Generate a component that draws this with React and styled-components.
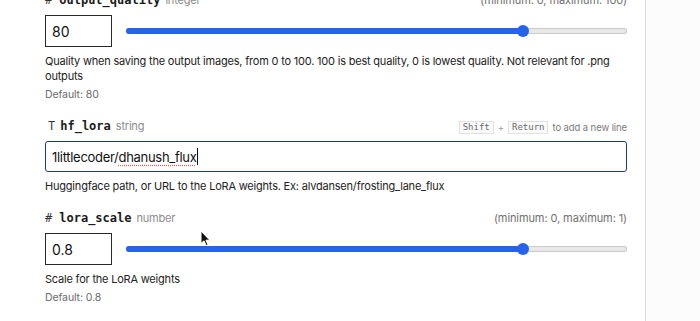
import styled, { createGlobalStyle } from 'styled-components';

const GlobalStyle = createGlobalStyle`
  html, body {
    margin: 0;
    padding: 0;
    background: #fff;
  }
  body {
    font-family: Inter, "Noto Sans", sans-serif;
    color: #1f1f1f;
    overflow: hidden;
  }
`;

function Slider({ value }) {
  const pos = `calc(6px + ${value} * (100% - 12px))`;
  return (
    <Track>
      <Fill style={{ width: pos }} />
      <Thumb style={{ left: pos }} />
    </Track>
  );
}

function App() {
  return (
    <Page>
      <GlobalStyle />
      <Main>
        <Form>
          <Field>
            <LabelRow>
              <Name>
                <Glyph>#</Glyph>output_quality<TypeName>integer</TypeName>
              </Name>
              <Range>(minimum: 0, maximum: 100)</Range>
            </LabelRow>
            <Row>
              <NumberBox>80</NumberBox>
              <Slider value={0.8} />
            </Row>
            <Description>
              Quality when saving the output images, from 0 to 100. 100 is best quality, 0 is lowest
              quality. Not relevant for .png outputs
            </Description>
            <Default>Default: 80</Default>
          </Field>

          <Field>
            <LabelRow>
              <Name>
                <Glyph $serif>T</Glyph>hf_lora<TypeName>string</TypeName>
              </Name>
              <Hint>
                <Kbd>Shift</Kbd>
                <Plus>+</Plus>
                <Kbd>Return</Kbd>
                <span>to add a new line</span>
              </Hint>
            </LabelRow>
            <TextBox>
              1littlecoder/<Misspelled>dhanush_flux</Misspelled>
              <Caret />
            </TextBox>
            <Description>
              Huggingface path, or URL to the LoRA weights. Ex: alvdansen/frosting_lane_flux
            </Description>
          </Field>

          <Field>
            <LabelRow>
              <Name>
                <Glyph>#</Glyph>lora_scale<TypeName>number</TypeName>
              </Name>
              <Range>(minimum: 0, maximum: 1)</Range>
            </LabelRow>
            <Row>
              <NumberBox>0.8</NumberBox>
              <Slider value={0.8} />
            </Row>
            <Description>Scale for the LoRA weights</Description>
            <Default>Default: 0.8</Default>
          </Field>
        </Form>
      </Main>
      <Side />
      <Pointer width="11" height="17" viewBox="0 0 11 17">
        <path
          d="M1 1 L1 13.5 L4 10.8 L6.2 15.6 L8 14.8 L5.9 10.2 L9.8 10.2 Z"
          fill="#111"
          stroke="#fff"
          strokeWidth="1"
          strokeLinejoin="round"
        />
      </Pointer>
    </Page>
  );
}

export default App;

const Page = styled.div`
  position: relative;
  display: flex;
  width: 700px;
  height: 321px;
  overflow: hidden;
`;

const Main = styled.div`
  width: 646px;
  box-sizing: border-box;
  padding: 0 18px 0 45px;
  border-right: 1px solid #dcdcdc;
  background: #fff;
`;

const Side = styled.div`
  flex: 1;
  background: #fcfcfc;
`;

const Form = styled.div`
  display: flex;
  flex-direction: column;
  gap: 16px;
  margin-top: -8px;
`;

const Field = styled.div`
  display: flex;
  flex-direction: column;
`;

const LabelRow = styled.div`
  display: flex;
  justify-content: space-between;
  align-items: baseline;
  height: 16px;
  line-height: 16px;
  margin-bottom: 7px;
`;

const Name = styled.div`
  font-family: "DejaVu Sans Mono", monospace;
  font-size: 12px;
  font-weight: 700;
  color: #1a1a1a;
`;

const Glyph = styled.span`
  font-family: ${(p) => (p.$serif ? '"Liberation Mono", monospace' : '"DejaVu Sans Mono", monospace')};
  font-weight: 400;
  margin-left: ${(p) => (p.$serif ? '3px' : '0')};
  margin-right: ${(p) => (p.$serif ? '5px' : '7px')};
  color: #333;
`;

const TypeName = styled.span`
  font-family: Inter, "Noto Sans", sans-serif;
  font-size: 11px;
  font-weight: 400;
  color: #8c8c8c;
  margin-left: 5px;
  letter-spacing: -0.2px;
`;

const Range = styled.span`
  font-size: 11px;
  letter-spacing: -0.1px;
  color: #707070;
`;

const Hint = styled.div`
  display: flex;
  align-items: center;
  gap: 4px;
  font-size: 9.5px;
  letter-spacing: -0.1px;
  color: #7a7a7a;
`;

const Kbd = styled.span`
  font-family: "DejaVu Sans Mono", monospace;
  font-size: 9px;
  line-height: 11px;
  letter-spacing: 0;
  padding: 0 3px;
  border: 1px solid #e2e2e2;
  background: #fafafa;
  color: #6a6a6a;
`;

const Plus = styled.span`
  color: #9a9a9a;
`;

const Row = styled.div`
  display: flex;
  align-items: center;
  gap: 14px;
`;

const NumberBox = styled.div`
  width: 67px;
  height: 32px;
  box-sizing: border-box;
  border: 1px solid #2a2a2a;
  padding: 0 6px;
  display: flex;
  align-items: center;
  font-size: 14px;
  color: #111;
`;

const Track = styled.div`
  position: relative;
  flex: 1;
  height: 6px;
  border-radius: 3px;
  background: #e8e8e8;
  box-shadow: inset 0 0 0 1px #cacaca;
`;

const Fill = styled.div`
  position: absolute;
  left: 0;
  top: 0;
  bottom: 0;
  border-radius: 3px;
  background: #2563eb;
`;

const Thumb = styled.div`
  position: absolute;
  top: 50%;
  width: 12px;
  height: 12px;
  border-radius: 50%;
  background: #2563eb;
  transform: translate(-50%, -50%);
`;

const TextBox = styled.div`
  height: 31px;
  box-sizing: border-box;
  border: 1.5px solid #1e3a8a;
  border-radius: 3px;
  padding: 0 6px;
  display: flex;
  align-items: center;
  font-size: 13px;
  letter-spacing: -0.3px;
  color: #111;
  white-space: pre;
`;

const Misspelled = styled.span`
  text-decoration: underline dotted #e06060;
  text-underline-offset: 3px;
`;

const Caret = styled.span`
  width: 1px;
  height: 17px;
  margin-left: 1px;
  background: #111;
`;

const Description = styled.div`
  margin-top: 7px;
  font-size: 11px;
  letter-spacing: -0.2px;
  line-height: 15px;
  color: #222;
`;

const Default = styled.div`
  margin-top: 3px;
  font-size: 10.5px;
  letter-spacing: -0.1px;
  line-height: 15px;
  color: #6b6b6b;
`;

const Pointer = styled.svg`
  position: absolute;
  left: 200px;
  top: 230px;
`;
